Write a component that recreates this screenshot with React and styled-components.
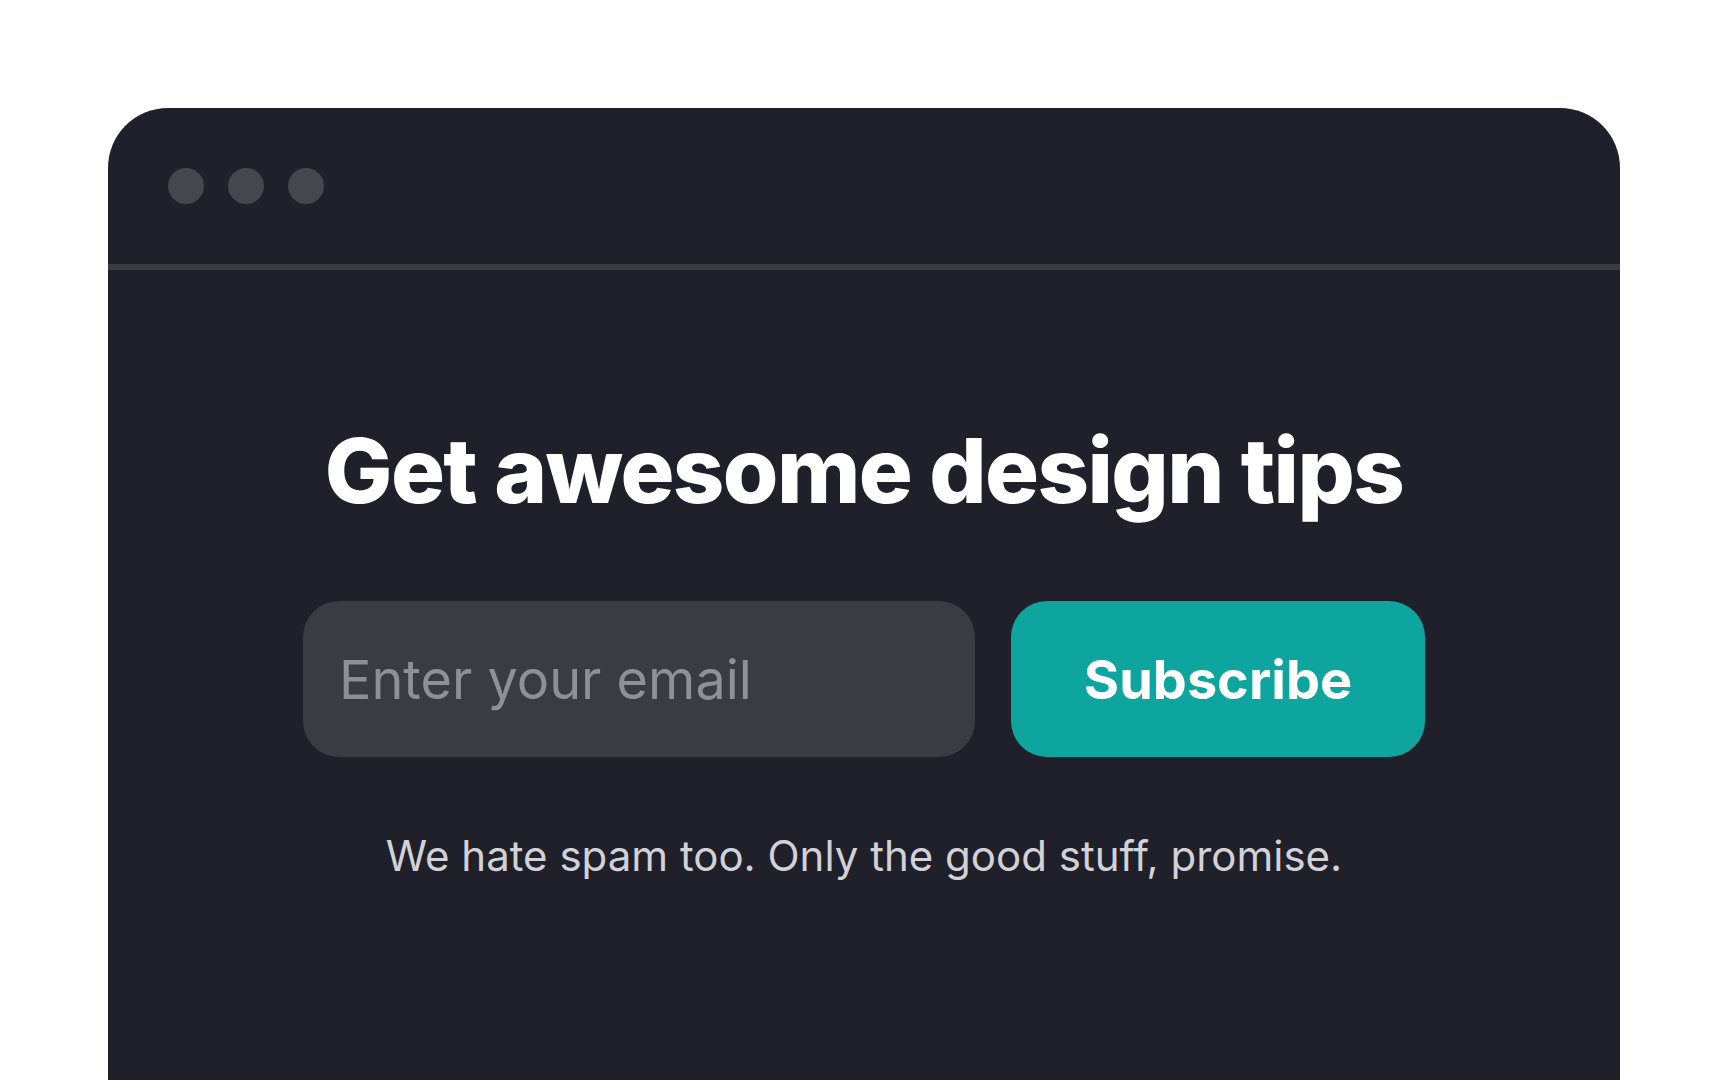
import styled, { createGlobalStyle } from 'styled-components';

const GlobalStyle = createGlobalStyle`
  html, body {
    margin: 0;
    padding: 0;
    background: #FFFFFF;
    overflow: hidden;
  }
  body {
    font-family: Inter, "Noto Sans", sans-serif;
  }
`;

const Page = styled.div`
  padding: 108px 108px 0;
`;

const Window = styled.div`
  height: 1100px;
  border-radius: 60px 60px 0 0;
  background: #1F2029;
  display: flex;
  flex-direction: column;
`;

const TitleBar = styled.div`
  height: 156px;
  padding: 0 60px;
  display: flex;
  align-items: center;
  gap: 24px;
  border-bottom: 6px solid #3A3B43;
`;

const Dot = styled.span`
  width: 36px;
  height: 36px;
  border-radius: 50%;
  background: #45464E;
`;

const Body = styled.div`
  padding-top: 147px;
  display: flex;
  flex-direction: column;
  align-items: center;
  gap: 76px;
`;

const Heading = styled.h1`
  margin: 0;
  font-family: Inter, sans-serif;
  font-weight: 800;
  font-size: 90px;
  line-height: 108px;
  letter-spacing: -0.018em;
  color: #FFFFFF;
`;

const Form = styled.form`
  display: flex;
  gap: 36px;
`;

const EmailInput = styled.input`
  box-sizing: border-box;
  width: 672px;
  height: 156px;
  padding: 0 36px;
  border: none;
  outline: none;
  border-radius: 36px;
  background: #3A3B43;
  color: #FFFFFF;
  font-family: Inter, sans-serif;
  font-size: 54px;

  &::placeholder {
    color: #8F9096;
  }
`;

const SubscribeButton = styled.button`
  width: 414px;
  height: 156px;
  border: none;
  border-radius: 36px;
  background: #0FA59F;
  color: #FFFFFF;
  font-family: Inter, sans-serif;
  font-weight: 700;
  font-size: 54px;
  cursor: pointer;
`;

const Note = styled.p`
  margin: 0;
  font-family: Inter, sans-serif;
  font-size: 42px;
  line-height: 45px;
  color: #D2D2D6;
`;

export default function App() {
  return (
    <>
      <GlobalStyle />
      <Page>
        <Window>
          <TitleBar>
            <Dot />
            <Dot />
            <Dot />
          </TitleBar>
          <Body>
            <Heading>Get awesome design tips</Heading>
            <Form onSubmit={(e) => e.preventDefault()}>
              <EmailInput type="email" placeholder="Enter your email" />
              <SubscribeButton type="submit">Subscribe</SubscribeButton>
            </Form>
            <Note>We hate spam too. Only the good stuff, promise.</Note>
          </Body>
        </Window>
      </Page>
    </>
  );
}
